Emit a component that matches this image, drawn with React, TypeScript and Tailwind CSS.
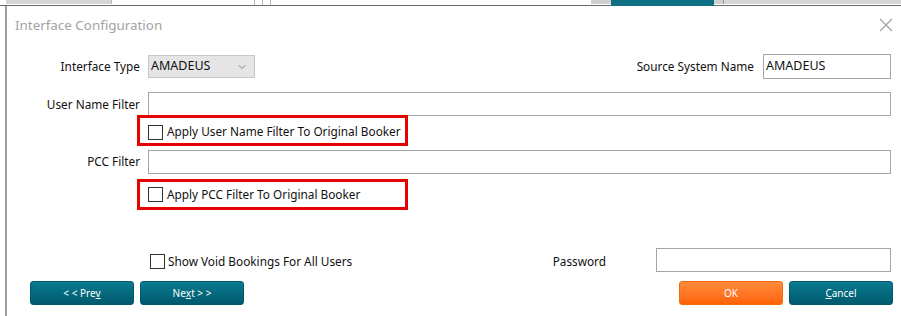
import { ChevronDown } from 'lucide-react'

function Checkbox() {
  return <div className="w-[15px] h-[15px] border border-[#333] bg-white shrink-0"></div>
}

function TealButton({ children }: { children: React.ReactNode }) {
  return (
    <button className="w-[104px] h-[24px] rounded-[3px] bg-gradient-to-b from-[#0b7a90] to-[#005a6d] border border-[#05586a] text-white text-[10px] flex items-center justify-center">
      {children}
    </button>
  )
}

export default function App() {
  return (
    <div
      className="w-[901px] h-[316px] bg-white overflow-hidden text-[11.8px] text-[#111] whitespace-nowrap"
      style={{ fontFamily: '"Noto Sans", "Open Sans", sans-serif' }}
    >
      {/* strip of the window behind */}
      <div className="h-[6px] flex items-start border-b border-[#6b6b6b] relative">
        <div className="w-[6px] h-full"></div>
        <div className="w-[106px] h-[4px] bg-[#d6d6d6] border-r border-[#bbb]"></div>
        <div className="w-[143px] h-[5px] border-r border-[#bbb]"></div>
        <div className="w-[8px] h-[5px] border-r border-[#bbb]"></div>
        <div className="w-[8px] h-[5px] border-r border-[#bbb]"></div>
        <div className="w-[320px] h-[5px]"></div>
        <div className="w-[20px] h-[4px] bg-[#d0d0d0]"></div>
        <div className="w-[103px] h-[6px] bg-[#0e6f85]"></div>
        <div className="w-[10px] h-[4px] bg-[#d0d0d0] border-r border-[#999]"></div>
        <div className="flex-1 h-[4px] bg-[#d6d6d6]"></div>
      </div>

      <div className="ml-[5px] h-[310px] border-l-2 border-[#a0a0a0] flex flex-col">
        {/* header */}
        <div className="h-[36px] flex items-center justify-between pl-[8px] pr-[8px]">
          <span className="text-[13.4px] text-[#a3a3a3] mt-[3px]">Interface Configuration</span>
          <svg width="14" height="14" viewBox="0 0 14 14" className="mt-[1px]">
            <path d="M1 1 L13 13 M13 1 L1 13" stroke="#a0a0a0" strokeWidth="1.2" fill="none" />
          </svg>
        </div>

        {/* interface type / source system */}
        <div className="mt-[12px] h-[25px] flex items-center pr-[10px]">
          <div className="w-[133px] text-right">Interface Type</div>
          <div className="ml-[8px] w-[107px] h-[23px] bg-[#e5e5e5] border border-[#c8c8c8] flex items-center justify-between pl-[2px] pr-[6px]">
            <span className="text-[12.5px]">AMADEUS</span>
            <ChevronDown className="w-[12px] h-[12px] text-[#666]" strokeWidth={1.5} />
          </div>
          <div className="ml-auto">Source System Name</div>
          <div className="ml-[9px] w-[128px] h-[25px] border border-[#a5a5a5] flex items-center pl-[2px] text-[12.5px]">AMADEUS</div>
        </div>

        {/* user name filter */}
        <div className="mt-[13px] h-[24px] flex items-center pr-[10px]">
          <div className="w-[133px] text-right pt-[1px]">User Name Filter</div>
          <div className="ml-[8px] flex-1 h-[24px] border border-[#a5a5a5]"></div>
        </div>
        <div className="-mt-[1px] ml-[130px] w-[271px] h-[31px] border-[3px] border-[#e60000] flex items-center pl-[8px] pt-[3px]">
          <Checkbox />
          <span className="ml-[4px]">Apply User Name Filter To Original Booker</span>
        </div>

        {/* pcc filter */}
        <div className="mt-[4px] h-[24px] flex items-center pr-[10px]">
          <div className="w-[133px] text-right">PCC Filter</div>
          <div className="ml-[8px] flex-1 h-[24px] border border-[#a5a5a5]"></div>
        </div>
        <div className="mt-[5px] ml-[130px] w-[271px] h-[31px] border-[3px] border-[#e60000] flex items-center pl-[8px]">
          <Checkbox />
          <span className="ml-[4px]">Apply PCC Filter To Original Booker</span>
        </div>

        {/* void bookings / password */}
        <div className="mt-[38px] h-[24px] flex items-center pr-[10px]">
          <div className="ml-[143px] pt-[2px]">
            <Checkbox />
          </div>
          <span className="ml-[3px] pt-[3px]">Show Void Bookings For All Users</span>
          <span className="ml-auto pt-[3px]">Password</span>
          <div className="ml-[50px] w-[235px] h-[24px] border border-[#a5a5a5]"></div>
        </div>

        {/* buttons */}
        <div className="mt-[9px] flex items-center pl-[23px] pr-[8px]">
          <TealButton>
            &lt; &lt; Pre<u>v</u>
          </TealButton>
          <div className="ml-[6px]">
            <TealButton>
              Ne<u>x</u>t &gt; &gt;
            </TealButton>
          </div>
          <button className="ml-auto w-[104px] h-[24px] rounded-[3px] bg-gradient-to-b from-[#ff8a3a] to-[#ff6200] border border-[#f06a10] text-white text-[10px]">
            OK
          </button>
          <div className="ml-[6px]">
            <TealButton>
              <u>C</u>ancel
            </TealButton>
          </div>
        </div>
      </div>
    </div>
  )
}
